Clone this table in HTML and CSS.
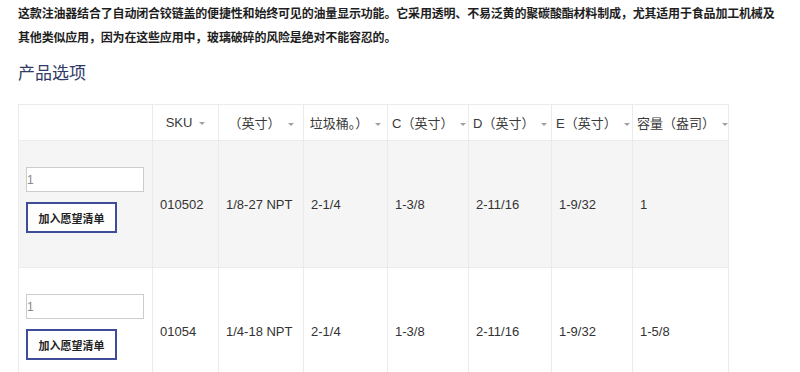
FILE: index.html
```html
<!DOCTYPE html>
<html lang="zh-CN">
<head>
<meta charset="utf-8">
<link rel="stylesheet" href="styles.css">
</head>
<body>
<div class="page">
  <p class="intro">这款注油器结合了自动闭合铰链盖的便捷性和始终可见的油量显示功能。它采用透明、不易泛黄的聚碳酸酯材料制成，尤其适用于食品加工机械及其他类似应用，因为在这些应用中，玻璃破碎的风险是绝对不能容忍的。</p>
  <h2 class="section-title">产品选项</h2>
  <table class="options">
    <colgroup>
      <col class="c-action"><col class="c-sku"><col class="c-a"><col class="c-b"><col class="c-c"><col class="c-d"><col class="c-e"><col class="c-cap">
    </colgroup>
    <thead>
      <tr>
        <th></th>
        <th>SKU<span class="sort"></span></th>
        <th>（英寸）<span class="sort"></span></th>
        <th>垃圾桶。）<span class="sort"></span></th>
        <th>C（英寸）<span class="sort"></span></th>
        <th>D（英寸）<span class="sort"></span></th>
        <th>E（英寸）<span class="sort"></span></th>
        <th>容量（盎司）<span class="sort"></span></th>
      </tr>
    </thead>
    <tbody>
      <tr class="alt">
        <td class="action">
          <input class="qty" type="text" value="1">
          <button class="wish" type="button">加入愿望清单</button>
        </td>
        <td>010502</td>
        <td>1/8-27 NPT</td>
        <td>2-1/4</td>
        <td>1-3/8</td>
        <td>2-11/16</td>
        <td>1-9/32</td>
        <td>1</td>
      </tr>
      <tr>
        <td class="action">
          <input class="qty" type="text" value="1">
          <button class="wish" type="button">加入愿望清单</button>
        </td>
        <td>01054</td>
        <td>1/4-18 NPT</td>
        <td>2-1/4</td>
        <td>1-3/8</td>
        <td>2-11/16</td>
        <td>1-9/32</td>
        <td>1-5/8</td>
      </tr>
    </tbody>
  </table>
</div>
</body>
</html>
```

FILE: styles.css
```css
html, body {
  margin: 0;
  padding: 0;
  background: #ffffff;
}

body {
  font-family: "Liberation Sans", Arial, "Noto Sans CJK SC", sans-serif;
  color: #333333;
}

.page {
  padding: 2px 0 0 18px;
  width: 762px;
}

.intro {
  margin: 0;
  font-size: 12px;
  line-height: 24px;
  font-weight: bold;
  color: #1e1e1e;
  letter-spacing: -0.18px;
}

.section-title {
  margin: 12px 0 18px 0;
  font-size: 17px;
  line-height: 24px;
  font-weight: normal;
  color: #303a68;
}

.options {
  border-collapse: collapse;
  table-layout: fixed;
  width: 710px;
  font-size: 13px;
}

.c-action { width: 134px; }
.c-sku { width: 66px; }
.c-a { width: 85px; }
.c-b { width: 84px; }
.c-c { width: 81px; }
.c-d { width: 83px; }
.c-e { width: 81px; }
.c-cap { width: 96px; }

.options th,
.options td {
  border: 1px solid #ebebeb;
}

.options th {
  height: 35px;
  padding: 0 4px;
  font-weight: normal;
  color: #3a3a3a;
  text-align: center;
  white-space: nowrap;
  vertical-align: middle;
}

.sort {
  display: inline-block;
  width: 0;
  height: 0;
  margin-left: 7px;
  vertical-align: middle;
  border-left: 3px solid transparent;
  border-right: 3px solid transparent;
  border-top: 3px solid #a0a0a0;
}

.options td {
  padding: 0 8px 0 7px;
  text-align: left;
  vertical-align: middle;
  color: #333333;
  white-space: nowrap;
}

.options tr.alt td {
  background: #f5f5f5;
}

.options td.action {
  padding: 26px 8px 34px 7px;
  vertical-align: top;
}

.qty {
  display: block;
  box-sizing: border-box;
  width: 118px;
  height: 25px;
  margin: 0 0 10px 0;
  padding: 0;
  border: 1px solid #cccccc;
  background: #ffffff;
  font-family: "Liberation Sans", Arial, sans-serif;
  font-size: 12px;
  color: #888888;
  outline: none;
}

.wish {
  display: block;
  box-sizing: border-box;
  width: 91px;
  height: 31px;
  padding: 0;
  border: 2px solid #3e4c99;
  background: #ffffff;
  font-family: "Noto Sans CJK SC", sans-serif;
  font-size: 11px;
  font-weight: bold;
  color: #222222;
}
```
